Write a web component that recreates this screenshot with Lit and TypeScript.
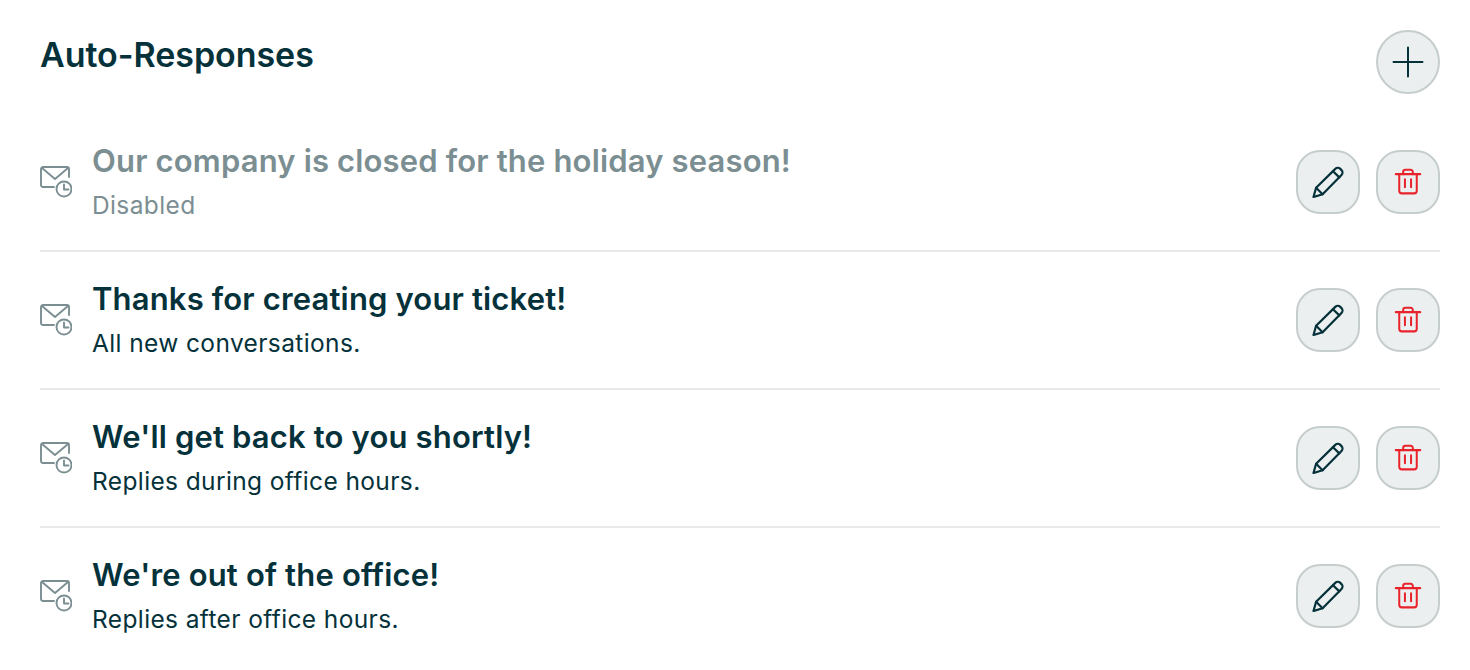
import { LitElement, html, css, svg } from "lit";
import { customElement } from "lit/decorators.js";

const plus = svg`<path d="M1.5 16H30.5M16 1.5V30.5" fill="none" stroke="currentColor" stroke-width="2" stroke-linecap="round"/>`;
const pencil = svg`<g fill="none" stroke="currentColor" stroke-width="2.200" stroke-linejoin="round" stroke-linecap="round"><path d="M1.500 31l2.600-9.200L23.300 2.900a3.600 3.600 0 0 1 5 0l1.200 1.200a3.600 3.600 0 0 1 0 5L10.600 28.300z"/><path d="M4.100 21.800l6.500 6.500M21 5.200l6.300 6.200"/></g>`;
const trash = svg`<g fill="none" stroke="currentColor" stroke-width="2.300" stroke-linejoin="round" stroke-linecap="round"><path d="M2 7H30"/><path d="M10.500 7V4.500A2.500 2.500 0 0 1 13 2h6A2.500 2.500 0 0 1 21.500 4.500V7"/><path d="M6 7V26a3 3 0 0 0 3 3H23a3 3 0 0 0 3-3V7"/><path d="M12.500 13V22M19.500 13V22"/></g>`;
const mail = svg`<g fill="none" stroke="currentColor" stroke-width="1.900" stroke-linejoin="round" stroke-linecap="round"><path d="M14 21H3a2 2 0 0 1-2-2V3a2 2 0 0 1 2-2H27a2 2 0 0 1 2 2V11"/><path d="M2 2L15 13L28 2"/><circle cx="24" cy="23" r="7.500"/><path d="M24 18.500V23.500H28.500"/></g>`;

const rows = [
  { title: "Our company is closed for the holiday season!", sub: "Disabled", off: true },
  { title: "Thanks for creating your ticket!", sub: "All new conversations." },
  { title: "We'll get back to you shortly!", sub: "Replies during office hours." },
  { title: "We're out of the office!", sub: "Replies after office hours." },
];

@customElement("app-root")
export class AppRoot extends LitElement {
  static styles = css`
    :host { display: block; width: 1470px; height: 670px; overflow: hidden; background: #fff; color: #05323a; font-family: Inter, "Noto Sans", sans-serif; }
    .page { padding: 30px 30px 0 40px; }
    .head { display: flex; justify-content: space-between; align-items: flex-start; height: 84px; }
    h1 { margin: 0; font-size: 34px; line-height: 50px; font-weight: 600; letter-spacing: -0.050px; }
    .btn { width: 64px; height: 64px; box-sizing: border-box; border: 2px solid #c5cdcd; background: #ecefef; border-radius: 24px; display: flex; align-items: center; justify-content: center; color: #05323a; padding: 0; }
    .btn.round { border-radius: 50%; }
    .btn.red { color: #e8232b; }
    .btn svg { display: block; }
    .row { height: 138px; box-sizing: border-box; border-bottom: 2px solid #e8eaea; display: flex; align-items: center; }
    .row:last-child { border-bottom-color: transparent; }
    .mail { width: 32px; height: 32px; color: #7b8e92; margin-right: 20px; flex: none; }
    .text { flex: 1; padding-top: 2px; }
    .title { font-size: 31px; line-height: 44px; font-weight: 600; letter-spacing: 0.160px; }
    .sub { font-size: 24.500px; line-height: 44px; font-weight: 400; letter-spacing: 0.380px; }
    .off .title, .off .sub { color: #7b8e92; }
    .actions { display: flex; gap: 16px; }
  `;

  render() {
    return html`<div class="page">
      <div class="head">
        <h1>Auto-Responses</h1>
        <button class="btn round"><svg width="32" height="32" viewBox="0 0 32 32">${plus}</svg></button>
      </div>
      ${rows.map(
        (r) => html`<div class="row ${r.off ? "off" : ""}">
          <svg class="mail" viewBox="0 0 32 32">${mail}</svg>
          <div class="text"><div class="title">${r.title}</div><div class="sub">${r.sub}</div></div>
          <div class="actions">
            <button class="btn"><svg width="32" height="32" viewBox="0 0 32 32">${pencil}</svg></button>
            <button class="btn red"><svg width="28" height="28" viewBox="0 0 32 32">${trash}</svg></button>
          </div>
        </div>`
      )}
    </div>`;
  }
}
